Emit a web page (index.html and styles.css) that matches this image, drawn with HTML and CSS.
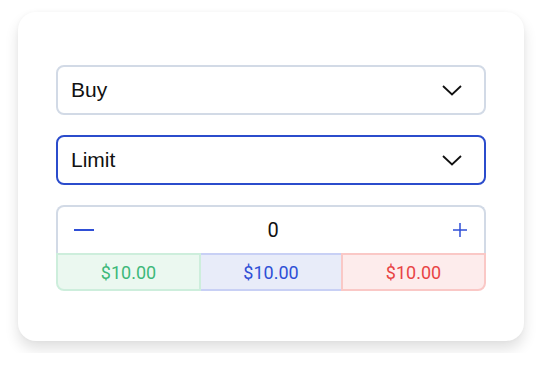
FILE: index.html
```html
<!DOCTYPE html>
<html lang="en">
<head>
  <meta charset="UTF-8">
  <title>Order form</title>
  <link rel="stylesheet" href="styles.css">
</head>
<body>
  <div class="card">
    <div class="select">
      <span class="selectText">Buy</span>
      <svg class="chevron" width="20" height="11" viewBox="0 0 20 11"><path d="M1 1 L10 9.5 L19 1" fill="none" stroke="#111" stroke-width="1.8"/></svg>
    </div>
    <div class="select active">
      <span class="selectText">Limit</span>
      <svg class="chevron" width="20" height="11" viewBox="0 0 20 11"><path d="M1 1 L10 9.5 L19 1" fill="none" stroke="#111" stroke-width="1.8"/></svg>
    </div>
    <div class="stepper">
      <div class="stepRow">
        <span class="stepBtn">
          <svg width="20" height="20" viewBox="0 0 20 20"><path d="M0 10 H20" stroke="#2f4fd6" stroke-width="2"/></svg>
        </span>
        <span class="stepValue">0</span>
        <span class="stepBtn">
          <svg width="16" height="16" viewBox="0 0 16 16"><path d="M1 8 H15 M8 1 V15" stroke="#2f4fd6" stroke-width="1.5"/></svg>
        </span>
      </div>
      <div class="priceRow">
        <span class="price green">$10.00</span>
        <span class="price blue">$10.00</span>
        <span class="price red">$10.00</span>
      </div>
    </div>
  </div>
</body>
</html>
```
FILE: styles.css
```css
* {
  margin: 0;
  padding: 0;
  box-sizing: border-box;
}

body {
  background: #fff;
  font-family: "Liberation Sans", Arial, sans-serif;
}

.card {
  width: 506px;
  height: 329px;
  margin: 12px 18px;
  padding: 53px 38px 0;
  background: #fff;
  border-radius: 18px;
  box-shadow: 0 8px 14px rgba(0, 0, 0, 0.12), 0 0 4px rgba(0, 0, 0, 0.03);
}

.select {
  height: 50px;
  margin-bottom: 20px;
  display: flex;
  align-items: center;
  justify-content: space-between;
  padding: 0 22px 0 13px;
  border: 2px solid #d2dae6;
  border-radius: 8px;
  color: #111;
  font-size: 21px;
}

.select.active {
  border-color: #2b4ccc;
}

.chevron {
  display: block;
}

.stepRow {
  height: 48px;
  display: flex;
  align-items: center;
  justify-content: space-between;
  padding: 0 16px;
  border: 2px solid #d2dae6;
  border-bottom: 0;
  border-radius: 8px 8px 0 0;
}

.stepBtn {
  display: flex;
  align-items: center;
}

.stepValue {
  font-family: Roboto, sans-serif;
  font-size: 20px;
  color: #111;
}

.priceRow {
  display: flex;
  height: 38px;
}

.price {
  display: flex;
  align-items: center;
  justify-content: center;
  border: 2px solid;
  font-family: Roboto, sans-serif;
  font-size: 18px;
}

.price.green {
  width: 145px;
  background: #ebf8f0;
  border-color: #cdeedc;
  color: #3db87a;
  border-radius: 0 0 0 8px;
}

.price.blue {
  width: 140px;
  background: #e8ecf9;
  border-color: #c8d0f5;
  border-left: 0;
  border-right: 0;
  color: #2f4fd6;
}

.price.red {
  width: 145px;
  background: #fdecec;
  border-color: #fac8c6;
  color: #e84444;
  border-radius: 0 0 8px 0;
}
```
